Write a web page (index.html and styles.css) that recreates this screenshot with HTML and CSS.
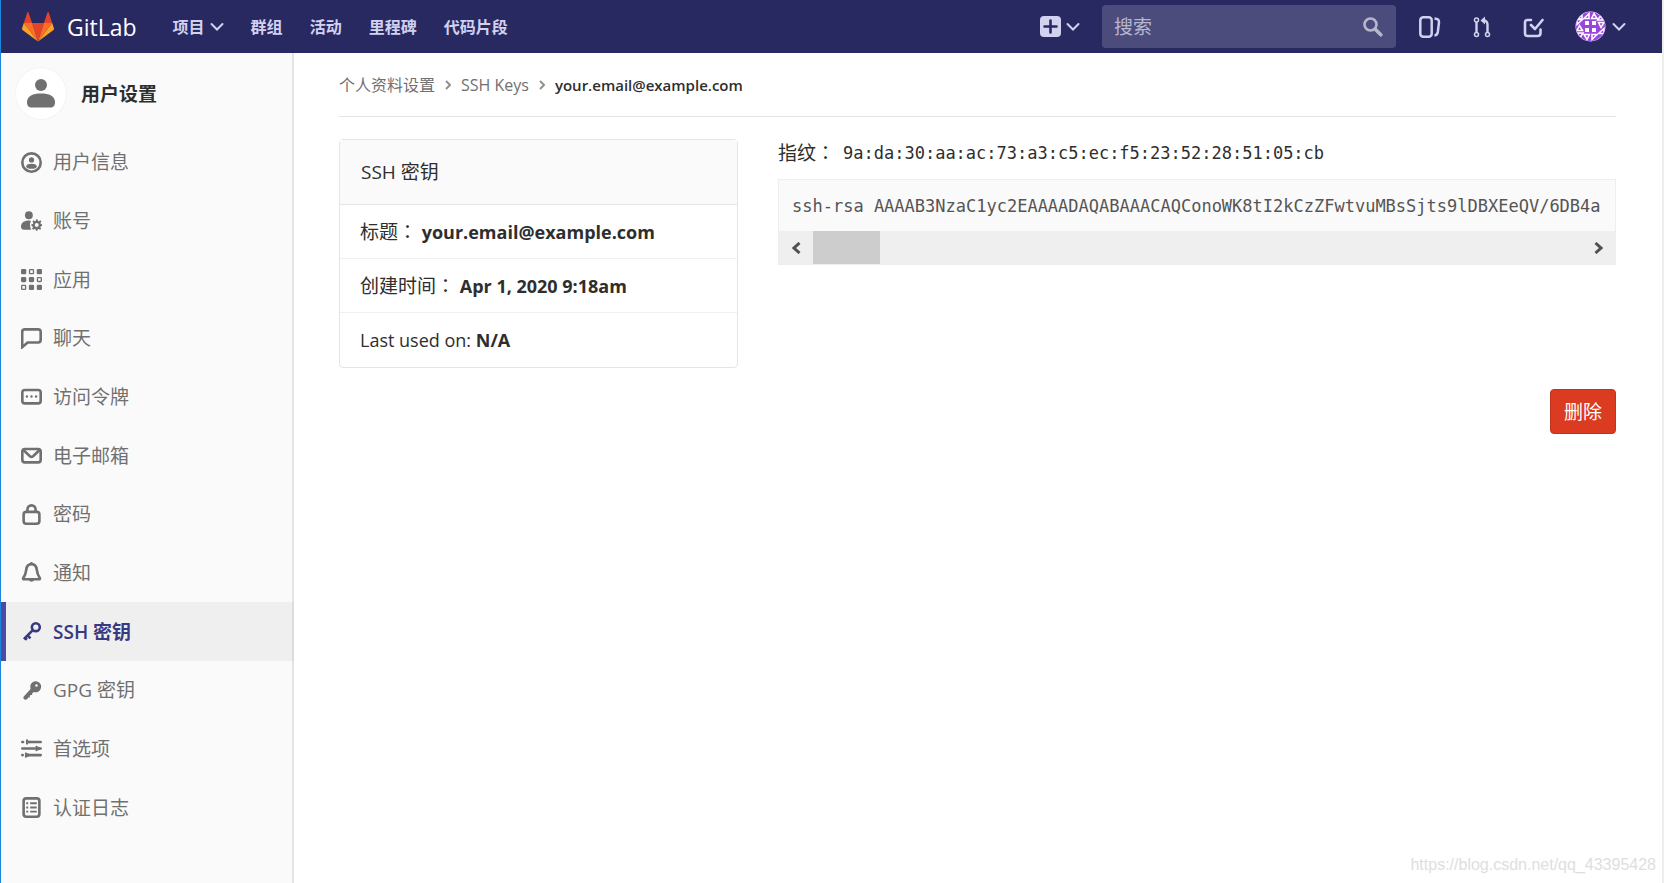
FILE: index.html
```html
<!DOCTYPE html>
<html lang="zh-CN">
<head>
<meta charset="utf-8">
<title>your.email@example.com · SSH Keys · GitLab</title>
<link rel="stylesheet" href="styles.css">
</head>
<body>
<header class="navbar">
  <a class="brand" href="#" aria-label="GitLab">
    <svg class="brand-logo" viewBox="0 0 32 30" aria-hidden="true">
      <path fill="#e24329" d="M16 29.5 21.9 11H10.1z"/>
      <path fill="#fc6d26" d="M16 29.5 10.1 11H1.8z"/>
      <path fill="#fca326" d="M1.8 11 0 16.6c-.2.5 0 1 .5 1.400L16 29.500z"/>
      <path fill="#e24329" d="M1.800 11h8.300L6.500 0.500c-.2-.6-1-.6-1.200 0z"/>
      <path fill="#fc6d26" d="M16 29.500 21.900 11h8.300z"/>
      <path fill="#fca326" d="M30.200 11 32 16.600c.2.5 0 1-.5 1.400L16 29.500z"/>
      <path fill="#e24329" d="M30.200 11h-8.300l3.600-10.500c.2-.6 1-.6 1.200 0z"/>
    </svg>
    <span class="brand-name">GitLab</span>
  </a>
  <nav class="main-nav">
    <a href="#">项目<svg class="caret" viewBox="0 0 14 10" aria-hidden="true"><path d="m1.500 2 5.500 5.500L12.500 2"/></svg></a>
    <a href="#">群组</a>
    <a href="#">活动</a>
    <a href="#">里程碑</a>
    <a href="#">代码片段</a>
  </nav>
  <button class="nav-button new-button" type="button" aria-label="新建">
    <svg width="21" height="21" viewBox="0 0 21 21" aria-hidden="true"><rect width="21" height="21" rx="4" fill="#d1d1f0"/><path d="M10.500 4.500v12M4.500 10.500h12" stroke="#292961" stroke-width="2.600" stroke-linecap="round"/></svg>
    <svg class="caret" viewBox="0 0 14 10" aria-hidden="true"><path d="m1.500 2 5.500 5.500L12.500 2"/></svg>
  </button>
  <form class="search">
    <input type="text" placeholder="搜索" aria-label="搜索">
    <svg width="20" height="20" viewBox="0 0 20 20" fill="none" stroke="#b6b6cf" aria-hidden="true"><circle cx="7.500" cy="7.500" r="6" stroke-width="2.600"/><path d="m12.500 12.500 5.300 5.300" stroke-width="3.600" stroke-linecap="round"/></svg>
  </form>
  <nav class="tool-nav">
    <a href="#" aria-label="议题"><svg width="22" height="22" viewBox="0 0 22 22" fill="none" stroke="#d1d1f0" stroke-width="2.500" aria-hidden="true"><rect x="1.300" y="1.300" width="11.400" height="19.400" rx="3"/><path d="M15.500 2.400c3 .3 4.800 1.400 4.500 4l-1.200 9.600c-.3 2-1.200 3.200-3.300 3.400"/></svg></a>
    <a href="#" aria-label="合并请求"><svg width="18" height="22" viewBox="0 0 18 22" fill="none" stroke="#d1d1f0" aria-hidden="true"><circle cx="3.500" cy="4" r="2" stroke-width="1.500"/><circle cx="3.500" cy="18.500" r="2" stroke-width="1.500"/><circle cx="14.500" cy="18.500" r="2" stroke-width="1.500"/><path d="M3.500 6v10.500M14.500 16.500V8.500c0-2.700-1.400-4-4-4" stroke-width="2.400"/><path d="M12 .5v8L7.500 4.500z" fill="#d1d1f0" stroke="none"/></svg></a>
    <a href="#" aria-label="待办事项"><svg width="21" height="22" viewBox="0 0 21 22" fill="none" stroke="#d1d1f0" stroke-width="2.600" stroke-linecap="round" stroke-linejoin="round" aria-hidden="true"><path d="M8 4H4.500Q2 4 2 6.500v11Q2 20 4.500 20h10q3 0 3-3v-3.500"/><path d="m8 9 4 4 7.500-9"/></svg></a>
  </nav>
  <button class="nav-button user-button" type="button" aria-label="用户菜单">
    <svg width="31" height="31" viewBox="0 0 31 31" aria-hidden="true">
      <defs><clipPath id="disc"><circle cx="15.500" cy="15.500" r="14.500"/></clipPath></defs>
      <circle cx="15.500" cy="15.500" r="15" fill="#f0e5fa"/>
      <g clip-path="url(#disc)">
        <path fill="#9b45e0" d="M0 0h31v31H0z"/>
        <path fill="#fff" d="M10 10h4v4h-4zM17 10h4v4h-4zM10 17h4v4h-4zM17 17h4v4h-4z"/>
        <path fill="none" stroke="#fff" stroke-width="1.500" d="m9 7.500 5-5v5zM16.500 7.500l2.500-5 3 5zM22.500 9l6 0-3-4zM23.500 11.500l2.500 5 3-5zM23.500 22.500l5.500-5v5zM22 23.500l-5 5v-5zM14.500 23.500l-2.500 5-3-5zM8 22l-6 0 3 5zM7.500 19.500l-3-5-2.500 5zM7.500 8.500l-5.500 5v-5zM3 8l4-5v5z"/>
      </g>
    </svg>
    <svg class="caret" viewBox="0 0 14 10" aria-hidden="true"><path d="m1.500 2 5.500 5.500L12.500 2"/></svg>
  </button>
</header>

<div class="page">
  <aside class="sidebar">
    <a class="context" href="#">
      <span class="context-avatar"><svg width="30" height="29" viewBox="0 0 30 29" fill="#707070" aria-hidden="true"><circle cx="15" cy="6" r="6"/><path d="M1 23c0-6 6-8.500 14-8.500S29 17 29 23c0 4-1.500 5.500-5 5.500H6c-3.500 0-5-1.500-5-5.500z"/></svg></span>
      <strong>用户设置</strong>
    </a>
    <ul class="menu">
      <li><a href="#"><svg viewBox="0 0 16 16" aria-hidden="true"><circle class="line" cx="8" cy="8" r="7"/><circle cx="8" cy="6" r="2"/><path d="M4 10.800C4 9.500 5.800 8.900 8 8.900s4 .6 4 1.900S10.200 12.800 8 12.800s-4-.7-4-2z"/></svg>用户信息</a></li>
      <li><a href="#"><svg viewBox="0 0 16 16" aria-hidden="true"><circle cx="6" cy="4" r="3"/><path d="M6 8c.9 0 1.200.1 1.500.5-.9 1.500-.9 4.500.3 6.500H2.500C.8 15 0 14 0 12.500 0 9.800 2.500 8 6 8z"/><path fill-rule="evenodd" d="m11.400 7 1.200 0 .2 1.200.8.4 1.100-.7.800.9-.7 1 .3.800 1.100.3v1.200l-1.100.3-.4.800.7 1-.9.900-1-.7-.7.300-.3 1.100h-1.100l-.3-1.100-.8-.3-1 .7-.9-.9.700-1-.4-.8L7.900 12v-1.100l1.200-.3.300-.8-.7-1 .9-.9 1 .7.700-.3zM12 9.900a1.500 1.500 0 1 0 0 3 1.500 1.500 0 0 0 0-3z"/></svg>账号</a></li>
      <li><a href="#"><svg viewBox="0 0 16 16" aria-hidden="true"><rect width="4" height="4" rx="1"/><rect class="thin" x="6.500" y=".5" width="3" height="3" rx=".5"/><rect x="12" width="4" height="4" rx="1"/><rect y="6" width="4" height="4" rx="1"/><rect x="6" y="6" width="4" height="4" rx="1"/><rect class="thin" x="12.500" y="6.500" width="3" height="3" rx=".5"/><rect class="thin" x=".5" y="12.500" width="3" height="3" rx=".5"/><rect x="6" y="12" width="4" height="4" rx="1"/><rect x="12" y="12" width="4" height="4" rx="1"/></svg>应用</a></li>
      <li><a href="#"><svg viewBox="0 0 16 16" aria-hidden="true"><path class="line" d="M.9 14.600V3Q.9 1 2.900 1H13q2 0 2 2v6q0 2-2 2H5z"/></svg>聊天</a></li>
      <li><a href="#"><svg viewBox="0 0 16 16" aria-hidden="true"><rect class="line" x="1" y="3" width="14" height="10.200" rx="2"/><circle cx="4.500" cy="8" r=".9"/><circle cx="8" cy="8" r=".9"/><circle cx="11.500" cy="8" r=".9"/></svg>访问令牌</a></li>
      <li><a href="#"><svg viewBox="0 0 16 16" aria-hidden="true"><rect class="line" x="1" y="3" width="14" height="10.200" rx="2"/><path class="line" d="M2 4l4.800 4.500q1.200 1 2.400 0L14 4"/></svg>电子邮箱</a></li>
      <li><a href="#"><svg viewBox="0 0 16 16" aria-hidden="true"><rect class="line" x="2" y="6" width="12" height="9" rx="2"/><path class="line" d="M4.900 6V4.100a3.100 3.100 0 0 1 6.200 0V6"/></svg>密码</a></li>
      <li><a href="#"><svg viewBox="0 0 16 16" aria-hidden="true"><path class="line" d="M8 1.600c-2.400 0-3.700 1.600-4 4.300C3.700 9 2.900 10.500 1.700 12.200q-.4.900.6.900h11.400q1 0 .6-.9C13.100 10.500 12.300 9 12 5.900c-.3-2.700-1.600-4.300-4-4.300z"/><path d="M7 1a1 1 0 0 1 2 0v1H7zM6 13h4a2 2 0 0 1-4 0z"/></svg>通知</a></li>
      <li class="active"><a href="#" aria-current="page"><svg viewBox="0 0 16 16" aria-hidden="true"><circle class="line" cx="11.300" cy="4.700" r="3"/><path class="line" d="M9 7 2.200 13.800M5 11l2.200 2.200M2.900 12.700l1.600 1.600"/></svg>SSH 密钥</a></li>
      <li><a href="#"><svg viewBox="0 0 16 16" aria-hidden="true"><path fill-rule="evenodd" d="M7.300 6.800a4.200 4.200 0 1 1 2.400 2.300L8.500 10.300v1.200H7.300l-.6.600v1.200H5.500l-.7 1.200q-1 .8-2.100.3-1.100-.6-.9-1.900zM11.800 3.200a1 1 0 1 0 0 2 1 1 0 0 0 0-2z"/></svg>GPG 密钥</a></li>
      <li><a href="#"><svg viewBox="0 0 16 16" aria-hidden="true"><path class="line" stroke-linecap="round" d="M1 3h.600M6.500 3H15M1 8h9.500M15 8h-.5M1 13h.3M5.500 13H15"/><path d="M3.800 1.200q1.100-.6 1.600.3v3q-.5.900-1.600.3zM4 2h3v2H4zM11 6.200q1.100-.6 1.600.3l1.900.5v2l-1.900.5q-.5.900-1.600.3zM3 11.200q1.100-.6 1.600.3L6 12v2l-1.400.5q-.5.900-1.600.3z"/></svg>首选项</a></li>
      <li><a href="#"><svg viewBox="0 0 16 16" aria-hidden="true"><rect class="line" x="2" y="1" width="12" height="14" rx="2"/><path d="M4 4h1.500v1.500H4zM4 7.200h1.500v1.500H4zM4 10.400h1.500v1.500H4zM7 4h5v1.500H7zM7 7.200h5v1.500H7zM7 10.400h5v1.500H7z"/></svg>认证日志</a></li>
    </ul>
  </aside>

  <main class="content">
    <nav class="breadcrumbs" aria-label="面包屑">
      <a href="#">个人资料设置</a>
      <svg width="6" height="10" viewBox="0 0 6 10" aria-hidden="true"><path d="m1 1 4 4-4 4"/></svg>
      <a href="#">SSH Keys</a>
      <svg width="6" height="10" viewBox="0 0 6 10" aria-hidden="true"><path d="m1 1 4 4-4 4"/></svg>
      <a class="current" href="#">your.email@example.com</a>
    </nav>
    <div class="columns">
      <section class="card">
        <h2>SSH 密钥</h2>
        <ul>
          <li><span class="label">标题<span class="colon" lang="zh-TW">：</span></span> <strong>your.email@example.com</strong></li>
          <li><span class="label">创建时间<span class="colon" lang="zh-TW">：</span></span> <strong>Apr 1, 2020 9:18am</strong></li>
          <li>Last used on: <strong>N/A</strong></li>
        </ul>
      </section>
      <section class="details">
        <p class="fingerprint"><span class="label">指纹<span class="colon" lang="zh-TW">：</span></span><code>9a:da:30:aa:ac:73:a3:c5:ec:f5:23:52:28:51:05:cb</code></p>
        <div class="key-box">
          <pre>ssh-rsa AAAAB3NzaC1yc2EAAAADAQABAAACAQConoWK8tI2kCzZFwtvuMBsSjts9lDBXEeQV/6DB4a</pre>
          <div class="scrollbar">
            <button type="button" aria-label="向左滚动"><svg width="9" height="12" viewBox="0 0 9 12" aria-hidden="true"><path d="M7.500 1 2 6l5.500 5"/></svg></button>
            <span class="thumb"></span>
            <button type="button" aria-label="向右滚动"><svg width="9" height="12" viewBox="0 0 9 12" aria-hidden="true"><path d="M1.500 1 7 6l-5.500 5"/></svg></button>
          </div>
        </div>
      </section>
    </div>
    <div class="actions"><button class="danger" type="button">删除</button></div>
  </main>
</div>
<div class="watermark">https://blog.csdn.net/qq_43395428</div>
</body>
</html>
```
FILE: styles.css
```css
* { box-sizing: border-box; }

body {
  display: flex;
  flex-direction: column;
  min-height: 100vh;
  margin: 0;
  border-left: 1px solid #1a85dc;
  border-right: 2px solid #eee;
  background: #fff;
  color: #2e2e2e;
  font: 18px/28px "Open Sans", "Noto Sans CJK SC", sans-serif;
}

a { color: inherit; text-decoration: none; }
button, input { font: inherit; }
ul { margin: 0; padding: 0; list-style: none; }
svg { flex: none; }

/* Top bar */
.navbar {
  display: flex;
  align-items: center;
  height: 53px;
  padding: 0 36px 0 21px;
  background: #292961;
  color: #d1d1f0;
}
.brand { display: flex; align-items: center; gap: 13px; color: #fff; }
.brand-logo { width: 32px; height: 30px; }
.brand-name { font-size: 23px; }
.main-nav { display: flex; gap: 27px; margin-left: 36px; font-size: 16px; font-weight: 600; }
.main-nav a { display: flex; align-items: center; gap: 5px; }
.caret { width: 14px; height: 10px; fill: none; stroke: #d1d1f0; stroke-width: 2; stroke-linecap: round; }
.nav-button { display: flex; align-items: center; padding: 0; border: 0; background: none; }
.new-button { gap: 5px; margin-left: auto; margin-right: 22px; }
.search {
  display: flex;
  align-items: center;
  width: 294px;
  height: 43px;
  padding: 0 13px 0 12px;
  border-radius: 4px;
  background: #4c4c7c;
}
.search input { flex: 1; min-width: 0; padding: 0; border: 0; outline: 0; background: none; color: #fff; font-size: 19px; }
.search input::placeholder { color: #b6b6cf; opacity: 1; }
.tool-nav { display: flex; gap: 32px; margin-left: 23px; }
.tool-nav a { display: flex; }
.user-button { gap: 6px; margin-left: 31px; }

/* Page body */
.page { display: flex; flex: 1; }
.sidebar { width: 293px; border-right: 2px solid #e5e5e5; background: #fafafa; }
.context { display: flex; align-items: center; gap: 14px; padding: 14px 14px 13px; font-size: 19px; }
.context-avatar {
  display: flex;
  align-items: center;
  justify-content: center;
  width: 52px;
  height: 53px;
  border: 1px solid #f4f4f4;
  border-radius: 50%;
  background: #fff;
}
.menu { display: grid; grid-auto-rows: 1fr; min-height: 704px; color: #707070; font-size: 19px; }
.menu a { display: flex; align-items: center; gap: 11px; height: 100%; padding-left: 20px; }
.menu svg { width: 21px; height: 21px; fill: currentColor; }
.menu .line { fill: none; stroke: currentColor; stroke-width: 2; }
.menu .thin { fill: none; stroke: currentColor; stroke-width: 1; }
.menu .active { margin-right: -2px; border-left: 5px solid #4b4ba3; border-right: 2px solid #dcdcdc; background: #efefef; color: #393982; font-weight: 600; }
.menu .active a { padding-left: 15px; }

/* Main column */
.content { flex: 1; min-width: 0; padding: 0 46px 0 45px; }
.breadcrumbs {
  display: flex;
  align-items: center;
  gap: 10px;
  height: 64px;
  border-bottom: 1px solid #e5e5e5;
  color: #707070;
  font-size: 16px;
}
.breadcrumbs svg { fill: none; stroke: #919191; stroke-width: 2; }
.breadcrumbs .current { color: #2e2e2e; font-size: 15px; font-weight: 600; }
.columns { display: grid; grid-template-columns: repeat(12, 1fr); gap: 40px; padding-top: 22px; }
.card { grid-column: span 4; border: 1px solid #e5e5e5; border-radius: 4px; }
.card h2 { margin: 0; padding: 18px 21px; border-bottom: 1px solid #e5e5e5; background: #fafafa; font-size: 19px; font-weight: 400; }
.card li { padding: 13px 20px 12px; border-bottom: 1px solid #f0f0f0; }
.card li:last-child { padding-bottom: 13px; border-bottom: 0; }
.label { font-size: 19px; }
.colon { font-family: "Noto Sans CJK TC", sans-serif; line-height: 1; }
.details { grid-column: span 8; min-width: 0; }
.fingerprint { display: flex; align-items: center; gap: 8px; margin: 0 0 12px; }
.fingerprint code { font: 17px/28px "DejaVu Sans Mono", monospace; }
.key-box { border: 1px solid #eee; background: #fafafa; }
.key-box pre { margin: 0; padding: 12px 13px 11px; overflow: hidden; color: #555; font: 17px/28px "DejaVu Sans Mono", monospace; }
.scrollbar { display: flex; align-items: stretch; height: 33px; background: #efefef; }
.scrollbar button { display: flex; align-items: center; justify-content: center; width: 34px; padding: 0; border: 0; background: none; }
.scrollbar svg { fill: none; stroke: #505050; stroke-width: 3; }
.scrollbar .thumb { width: 67px; margin-right: auto; background: #cdcdcd; }
.actions { display: flex; justify-content: flex-end; padding-top: 21px; }
.danger { padding: 8px 13px 7px; border: 1px solid #c0341d; border-radius: 4px; background: #db3b21; color: #fff; font-size: 19px; }

.watermark {
  position: absolute;
  right: 8px;
  bottom: 8px;
  color: #dedede;
  font: 16px/20px "Liberation Sans", sans-serif;
}
```
